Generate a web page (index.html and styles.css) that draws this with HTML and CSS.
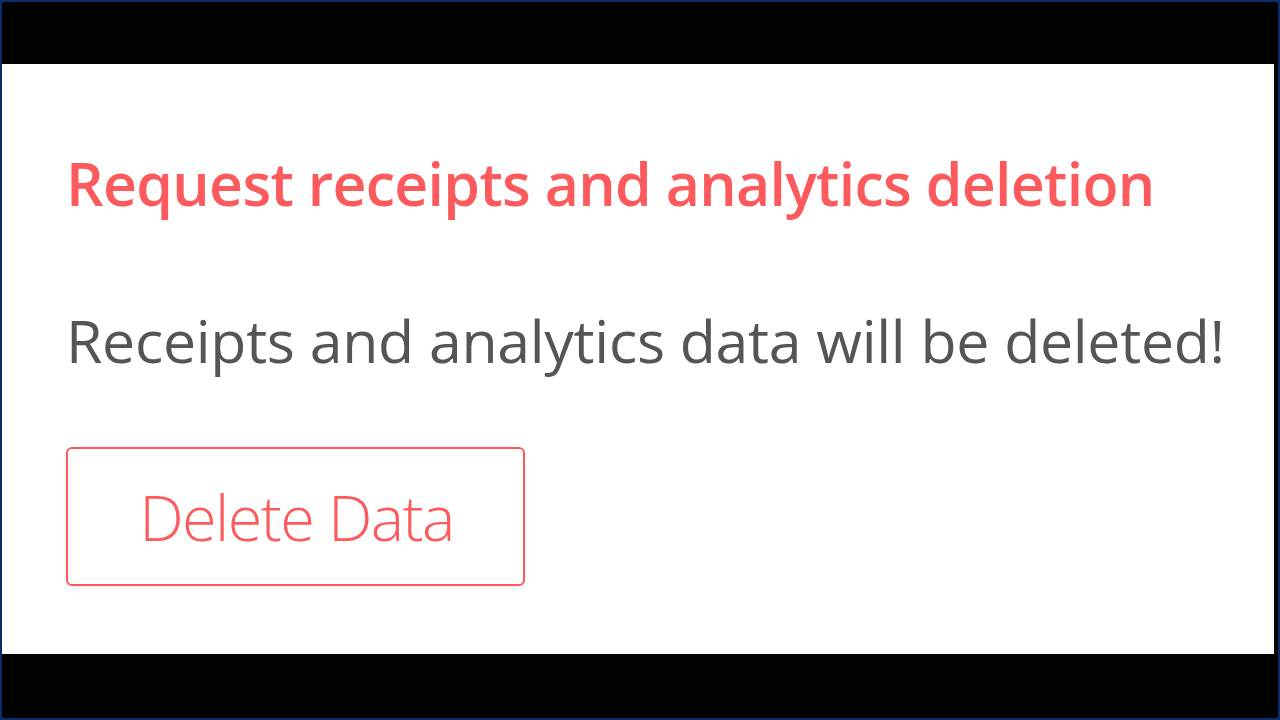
FILE: index.html
```html
<!DOCTYPE html>
<html>
<head>
<meta charset="utf-8">
<link rel="stylesheet" href="styles.css">
</head>
<body>
<div class="frame">
  <div class="panel">
    <h1 class="title">Request receipts and analytics deletion</h1>
    <p class="desc">Receipts and analytics data will be deleted!</p>
    <button class="btn">Delete Data</button>
  </div>
</div>
</body>
</html>
```

FILE: styles.css
```css
html, body {
  margin: 0;
  padding: 0;
  background: #000;
}
.frame {
  box-sizing: border-box;
  width: 1280px;
  height: 720px;
  border: 2px solid #0b2c66;
  background: #020202;
  padding: 62px 4px 0 0;
}
.panel {
  background: #fff;
  height: 590px;
  box-sizing: border-box;
  padding: 0 0 0 64px;
  display: flex;
  flex-direction: column;
  align-items: flex-start;
  font-family: "Open Sans", "Noto Sans", sans-serif;
}
.title {
  margin: 83px 0 0 0;
  font-size: 59px;
  line-height: 72px;
  font-weight: 600;
  color: #fd5a5e;
  letter-spacing: -0.7px;
}
.desc {
  margin: 85px 0 0 0;
  font-size: 59px;
  line-height: 72px;
  font-weight: 400;
  color: #555;
  letter-spacing: -0.3px;
}
.btn {
  margin-top: 71px;
  width: 459px;
  height: 139px;
  border: 2px solid #fd5a5e;
  border-radius: 6px;
  background: #fff;
  color: #fd5a5e;
  font-family: "Open Sans", "Noto Sans", sans-serif;
  font-size: 63px;
  font-weight: 300;
  letter-spacing: -1.6px;
  box-shadow: 0 3px 6px rgba(0,0,0,0.06);
  padding: 0 0 0 2px;
}
```
